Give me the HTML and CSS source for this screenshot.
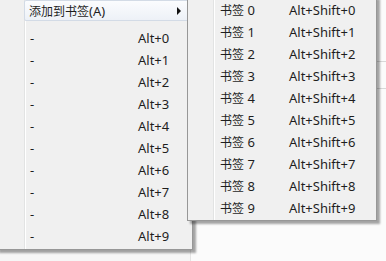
FILE: index.html
```html
<!DOCTYPE html>
<html>

<head>
    <meta charset="UTF-8">
    <title>添加到书签</title>
    <link rel="stylesheet" href="styles.css">
</head>

<body>
    <div class="desk">
        <div class="backdrop">
            <div class="backdrop-row"></div>
            <div class="backdrop-row"></div>
        </div>

        <div class="menu main-menu">
            <div class="menu-item top-item">
                <span class="label"><span class="cjk">添加到书签</span>(A)</span>
                <span class="arrow"></span>
            </div>
            <div class="menu-item"><span class="label">-</span><span class="key">Alt+0</span></div>
            <div class="menu-item"><span class="label">-</span><span class="key">Alt+1</span></div>
            <div class="menu-item"><span class="label">-</span><span class="key">Alt+2</span></div>
            <div class="menu-item"><span class="label">-</span><span class="key">Alt+3</span></div>
            <div class="menu-item"><span class="label">-</span><span class="key">Alt+4</span></div>
            <div class="menu-item"><span class="label">-</span><span class="key">Alt+5</span></div>
            <div class="menu-item"><span class="label">-</span><span class="key">Alt+6</span></div>
            <div class="menu-item"><span class="label">-</span><span class="key">Alt+7</span></div>
            <div class="menu-item"><span class="label">-</span><span class="key">Alt+8</span></div>
            <div class="menu-item"><span class="label">-</span><span class="key">Alt+9</span></div>
        </div>

        <div class="menu sub-menu">
            <div class="menu-item"><span class="label"><span class="cjk">书签</span> 0</span><span class="key">Alt+Shift+0</span></div>
            <div class="menu-item"><span class="label"><span class="cjk">书签</span> 1</span><span class="key">Alt+Shift+1</span></div>
            <div class="menu-item"><span class="label"><span class="cjk">书签</span> 2</span><span class="key">Alt+Shift+2</span></div>
            <div class="menu-item"><span class="label"><span class="cjk">书签</span> 3</span><span class="key">Alt+Shift+3</span></div>
            <div class="menu-item"><span class="label"><span class="cjk">书签</span> 4</span><span class="key">Alt+Shift+4</span></div>
            <div class="menu-item"><span class="label"><span class="cjk">书签</span> 5</span><span class="key">Alt+Shift+5</span></div>
            <div class="menu-item"><span class="label"><span class="cjk">书签</span> 6</span><span class="key">Alt+Shift+6</span></div>
            <div class="menu-item"><span class="label"><span class="cjk">书签</span> 7</span><span class="key">Alt+Shift+7</span></div>
            <div class="menu-item"><span class="label"><span class="cjk">书签</span> 8</span><span class="key">Alt+Shift+8</span></div>
            <div class="menu-item"><span class="label"><span class="cjk">书签</span> 9</span><span class="key">Alt+Shift+9</span></div>
        </div>
    </div>
</body>

</html>
```

FILE: styles.css
```css
body {
    margin: 0;
    background-color: #f6f6f6;
    font-family: "Noto Sans", "Noto Sans CJK SC", sans-serif;
    font-size: 13px;
    color: #1e1e1e;
}

.desk {
    position: relative;
    width: 386px;
    height: 261px;
    overflow: hidden;
}

/* window behind the popup menus */
.backdrop {
    position: absolute;
    left: 190px;
    top: 0;
    right: 0;
    bottom: 0;
    background-color: #fbfbfb;
    border-left: 1px solid #e4e4e4;
    padding-top: 61px;
}

.backdrop-row {
    height: 26px;
    border-top: 1px solid #d8d8d8;
}

.menu {
    position: absolute;
    box-sizing: border-box;
    background-color: #f0f0f0;
    border: 1px solid #979797;
    box-shadow: 3px 3px 2px rgba(0, 0, 0, 0.35);
}

/* icon gutter line */
.menu::before {
    content: "";
    position: absolute;
    top: 0;
    bottom: 0;
    width: 1px;
    background-color: #e2e3e3;
    border-right: 1px solid #fff;
}

.main-menu {
    left: -4px;
    top: -3px;
    width: 197px;
    height: 253px;
    padding: 2px;
}

.main-menu::before {
    left: 27px;
}

.sub-menu {
    left: 187px;
    top: -4px;
    width: 190px;
    height: 225px;
    padding: 2px 2px 1px 2px;
}

.sub-menu::before {
    left: 25px;
}

.cjk {
    font-size: 12px;
}

.menu-item {
    position: relative;
    display: flex;
    align-items: center;
    height: 22px;
    white-space: nowrap;
}

.label {
    flex: none;
    box-sizing: border-box;
}

.main-menu .label {
    width: 139px;
    padding-left: 31px;
}

.sub-menu .label {
    width: 99px;
    padding-left: 30px;
}

.main-menu .top-item {
    height: 21px;
    box-sizing: border-box;
    margin: 0 0 6px 25px;
    border: 1px solid #d3dbe6;
    border-radius: 2px;
    background: linear-gradient(#fbfcfe, #edf1f7);
}

.main-menu .top-item .label {
    width: 120px;
    padding-left: 4px;
}

.arrow {
    position: absolute;
    left: 152px;
    top: 6px;
    width: 0;
    height: 0;
    border-top: 4px solid transparent;
    border-bottom: 4px solid transparent;
    border-left: 4px solid #111;
}
```
